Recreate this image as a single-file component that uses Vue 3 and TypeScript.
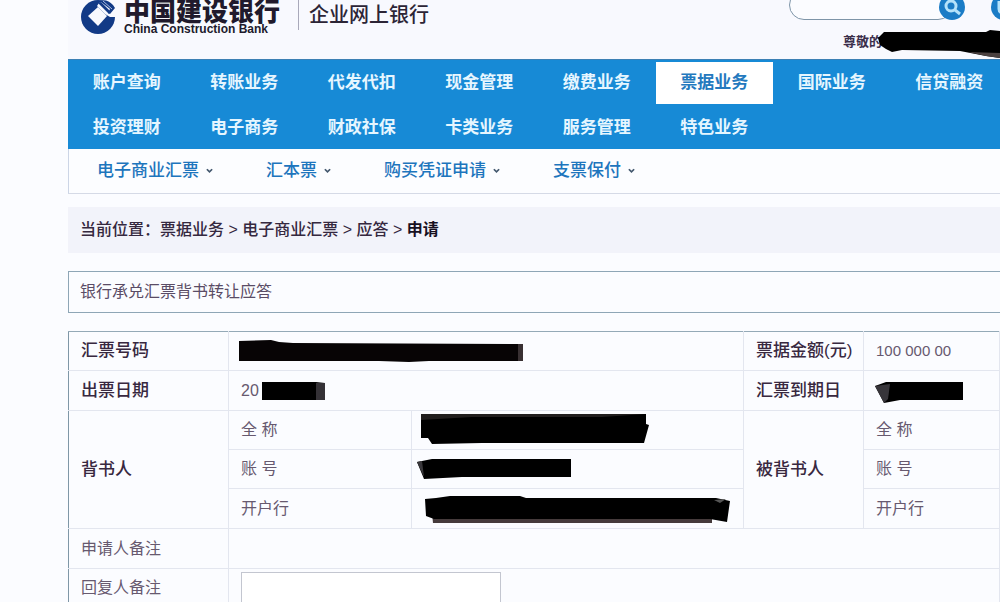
<script setup lang="ts">
import { ref } from 'vue'

const active = ref('票据业务')
const reply = ref('')
const keyword = ref('')

const menu: string[] = [
  '账户查询', '转账业务', '代发代扣', '现金管理', '缴费业务', '票据业务', '国际业务', '信贷融资',
  '投资理财', '电子商务', '财政社保', '卡类业务', '服务管理', '特色业务',
]
const submenu: string[] = ['电子商业汇票', '汇本票', '购买凭证申请', '支票保付']
</script>

<template>
  <div class="page">
    <header class="top">
      <a class="brand" href="#">
        <svg class="emblem" viewBox="0 0 36 36" aria-hidden="true">
          <circle cx="18" cy="17" r="17" fill="#123a86" />
          <path d="M18 7 27 16 18 26 8 16Z" fill="#f8f9fe" />
          <path d="M19 3 27 0 36 0 36 17 30 17 25 14 17 6Z" fill="#f8f9fe" />
          <path d="M19 1 C25 -1 29 1 33 5 L35 8 30 14 28 13 30 9 21 2Z" fill="#123a86" />
          <path d="M18 3 21 2 30 11 29 14Z" fill="#123a86" />
          <path d="M23 1 32 9" stroke="#a9bbe2" stroke-width="1" />
        </svg>
        <span class="names">
          <strong>中国建设银行</strong>
          <span class="english">China Construction Bank</span>
        </span>
      </a>
      <span class="product">企业网上银行</span>
      <div class="tools">
        <form class="search" @submit.prevent>
          <input v-model="keyword" type="text" aria-label="搜索" />
          <button type="submit" aria-label="搜索">
            <svg viewBox="0 0 26 26" aria-hidden="true">
              <circle cx="13" cy="13" r="13" fill="#1b7cc6" />
              <circle cx="12" cy="12" r="5" fill="none" stroke="#b5e2fa" stroke-width="3" />
              <path d="M16 16 21 20" stroke="#b5e2fa" stroke-width="3" />
            </svg>
          </button>
          <button class="more" type="button" aria-label="帮助">
            <svg viewBox="0 0 26 26" aria-hidden="true">
              <circle cx="13" cy="13" r="13" fill="#1b7cc6" />
              <path d="M8 7V15Q8 19 13 19" fill="none" stroke="#b5e2fa" stroke-width="3" />
            </svg>
          </button>
        </form>
        <div class="greeting">
          <span>尊敬的</span>
          <svg viewBox="0 0 122 30" aria-hidden="true">
            <path d="M0 9 6 3 108 3 112 1 122 2V29L108 27 82 22 24 21 14 23 8 20 2 16Z" fill="#000" />
            <path d="M90 23 122 24V29L108 27Z" fill="#4b4140" />
          </svg>
        </div>
      </div>
    </header>

    <main>
      <div class="menus">
        <nav class="menu">
          <a v-for="m in menu" :key="m" href="#" :class="{ on: m === active }" @click.prevent="active = m">{{ m }}</a>
        </nav>
        <nav class="submenu">
          <a v-for="s in submenu" :key="s" href="#">
            {{ s }}
            <svg viewBox="0 0 8 6" aria-hidden="true"><path d="M1 1 4 4 7 1" fill="none" stroke="#43586e" stroke-width="2" /></svg>
          </a>
        </nav>
      </div>

      <p class="crumbs">当前位置：票据业务 &gt; 电子商业汇票 &gt; 应答 &gt; <b>申请</b></p>
      <h1>银行承兑汇票背书转让应答</h1>

      <table>
        <colgroup>
          <col class="c-label" /><col class="c-key" /><col class="c-value" /><col class="c-side" /><col />
        </colgroup>
        <tbody>
          <tr>
            <th>汇票号码</th>
            <td class="mark" colspan="2">
              <svg width="300" height="38" viewBox="0 0 300 38" aria-hidden="true">
                <path d="M10 9 42 8 50 10 64 11 294 12V29H200L180 30 150 29 10 29Z" fill="#070405" />
                <path d="M289 12H294V29H289Z" fill="#383032" />
              </svg>
            </td>
            <th>票据金额(元)</th>
            <td class="amount">100 000 00</td>
          </tr>
          <tr class="tall">
            <th>出票日期</th>
            <td colspan="2">
              <span class="date">20
                <svg width="63" height="20" viewBox="0 0 63 20" aria-hidden="true">
                  <path d="M0 1H54L63 2V19H0Z" fill="#000" />
                  <path d="M54 2H63V19H54Z" fill="#343136" />
                </svg>
              </span>
            </td>
            <th>汇票到期日</th>
            <td class="mark">
              <svg width="110" height="38" viewBox="0 0 110 38" aria-hidden="true">
                <path d="M11 14 22 10 99 10V28H36L20 31Z" fill="#000" />
                <path d="M11 14 26 12 24 27 20 31Z" fill="#37353a" />
              </svg>
            </td>
          </tr>
          <tr>
            <th rowspan="3">背书人</th>
            <td>全 称</td>
            <td class="mark">
              <svg width="330" height="38" viewBox="0 0 330 38" aria-hidden="true">
                <path d="M9 3H234V13L237 14 232 32H70L20 33 16 27H9Z" fill="#000" />
                <path d="M9 3H234L190 6H60L9 9Z" fill="#211e1d" />
              </svg>
            </td>
            <th rowspan="3">被背书人</th>
            <td>全 称</td>
          </tr>
          <tr>
            <td>账 号</td>
            <td class="mark">
              <svg width="330" height="38" viewBox="0 0 330 38" aria-hidden="true">
                <path d="M5 12 20 9H159V27H50L12 29Z" fill="#000" />
                <path d="M5 12 10 11 12 27Z" fill="#39373b" />
              </svg>
            </td>
            <td>账 号</td>
          </tr>
          <tr class="tall">
            <td>开户行</td>
            <td class="mark">
              <svg width="330" height="38" viewBox="0 0 330 38" aria-hidden="true">
                <path d="M20 23H300V33H21Z" fill="#453a3b" />
                <path d="M13 9 24 8 38 6 108 6 114 8H304L318 11 315 32 298 29H22L14 26Z" fill="#000" />
                <path d="M302 10 314 9 308 13Z" fill="#555" />
              </svg>
            </td>
            <td>开户行</td>
          </tr>
          <tr class="tall">
            <td>申请人备注</td>
            <td colspan="4"></td>
          </tr>
          <tr>
            <td class="last"><label for="reply">回复人备注</label></td>
            <td class="field" colspan="4"><textarea id="reply" v-model="reply"></textarea></td>
          </tr>
        </tbody>
      </table>
    </main>
  </div>
</template>

<style>
body {
  margin: 0;
  background: #fbfcff;
}
html {
  overflow: hidden;
}
</style>

<style scoped>
.page {
  box-sizing: border-box;
  height: 100vh;
  padding-left: 68px;
  overflow: hidden;
  background: #fbfcff;
  color: #3b2f4b;
  font-family: "Liberation Sans", "Noto Sans CJK SC", sans-serif;
  font-size: 16px;
}
a {
  color: inherit;
  text-decoration: none;
}
.top {
  display: flex;
  align-items: flex-start;
  height: 59px;
  padding-left: 12px;
  background: #f8f9fe;
}
.brand {
  display: flex;
  gap: 8px;
  padding-right: 18px;
  color: #201a2c;
}
.emblem {
  width: 36px;
  height: 36px;
}
.names {
  display: flex;
  flex-direction: column;
  white-space: nowrap;
}
.names strong {
  font-size: 26px;
  font-weight: 900;
  line-height: 24px;
}
.english {
  font-size: 12px;
  font-weight: 700;
  line-height: 10px;
}
.product {
  padding-left: 10px;
  border-left: 1px solid #a9a9ba;
  font-size: 20px;
  font-weight: 500;
  line-height: 30px;
  color: #2c2536;
  white-space: nowrap;
}
.tools {
  margin-left: auto;
}
.search {
  display: flex;
  align-items: flex-end;
  justify-content: flex-end;
  height: 20px;
  margin-right: -17px;
}
.search input {
  box-sizing: border-box;
  width: 164px;
  height: 30px;
  margin-right: -14px;
  padding: 0 16px;
  border: 1px solid #7e95a8;
  border-radius: 15px;
  background: #fbfcff;
  font: inherit;
}
.search button {
  width: 26px;
  height: 26px;
  padding: 0;
  border: 0;
  background: none;
}
.search .more {
  margin-left: 26px;
}
.search svg {
  display: block;
}
.greeting {
  display: flex;
  justify-content: flex-end;
  align-items: flex-start;
  padding-top: 9px;
  font-size: 13px;
  font-weight: 700;
  line-height: 26px;
}
.greeting svg {
  width: 122px;
  height: 30px;
  margin-left: -4px;
}
.menus {
  border-left: 1px solid #ccd5e6;
  border-bottom: 1px solid #d5dae6;
}
.menu {
  display: grid;
  grid-template-columns: repeat(8, 1fr);
  row-gap: 3px;
  box-sizing: border-box;
  height: 90px;
  margin: 0 -8px 0 -1px;
  padding-top: 2px;
  border-top: 1px solid #3c80b4;
  background: #178ad6;
  color: #e6f6ff;
  font-size: 17px;
  font-weight: 700;
  line-height: 42px;
  text-align: center;
}
.menu a {
  height: 42px;
}
.menu .on {
  background: #fff;
  color: #2479be;
}
.submenu {
  display: flex;
  gap: 53px;
  padding-left: 28px;
  background: #fcfdff;
  color: #1d75bd;
  font-size: 17px;
  font-weight: 500;
  line-height: 44px;
}
.submenu a {
  display: flex;
  align-items: center;
  gap: 7px;
  white-space: nowrap;
}
.submenu svg {
  width: 7px;
  height: 6px;
}
.crumbs {
  margin: 13px 0 18px;
  padding: 0 12px;
  background: #f2f3fa;
  font-weight: 500;
  line-height: 46px;
  color: #35283f;
}
.crumbs b {
  color: #17101f;
}
h1 {
  margin: 0 -2px 18px 0;
  padding: 0 11px;
  border: 1px solid #8ea6b6;
  font-size: 16px;
  font-weight: 400;
  line-height: 40px;
  color: #5a4c66;
}
table {
  width: 100%;
  table-layout: fixed;
  border-collapse: collapse;
}
.c-label { width: 160px; }
.c-key { width: 183px; }
.c-value { width: 332px; }
.c-side { width: 120px; }
th,
td {
  height: 38px;
  padding: 0 12px;
  border: 1px solid #e3e6ef;
  font-size: 16px;
  font-weight: 400;
  line-height: 24px;
  text-align: left;
  color: #67596f;
  white-space: nowrap;
}
th {
  font-size: 17px;
  font-weight: 500;
  color: #38283f;
}
.tall td,
.tall th {
  height: 39px;
}
tr:first-child > * {
  border-top-color: #94a9b7;
}
tr > th:first-child,
tr:nth-child(n + 6) > td:first-child {
  border-left-color: #7f97a7;
}
td.mark {
  padding: 0;
}
.mark svg {
  display: block;
}
td.amount {
  font-size: 15px;
}
.date {
  display: flex;
  align-items: center;
  gap: 3px;
}
td.last {
  line-height: 38px;
  vertical-align: top;
}
td.field {
  padding-top: 3px;
  vertical-align: top;
}
textarea {
  box-sizing: border-box;
  display: block;
  width: 260px;
  height: 50px;
  border: 1px solid #c3c6d0;
  background: #fff;
  font: inherit;
  resize: none;
}
</style>
